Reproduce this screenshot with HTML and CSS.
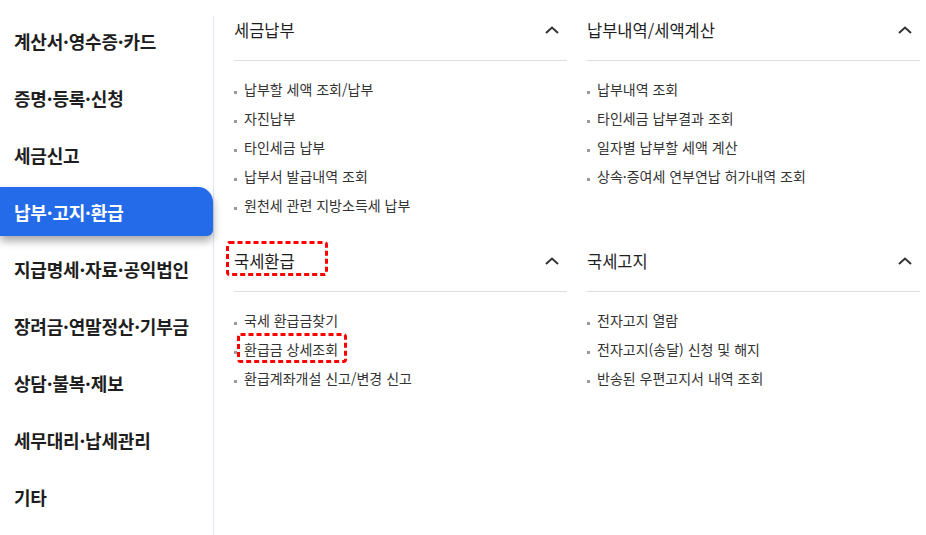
FILE: index.html
```html
<!DOCTYPE html>
<html lang="ko">
<head>
    <meta charset="utf-8">
    <title>납부·고지·환급</title>
    <link rel="stylesheet" href="styles.css">
</head>
<body>
    <div class="page">
        <ul class="side-menu">
            <li class="side-item">계산서·영수증·카드</li>
            <li class="side-item">증명·등록·신청</li>
            <li class="side-item">세금신고</li>
            <li class="side-item active">납부·고지·환급</li>
            <li class="side-item">지급명세·자료·공익법인</li>
            <li class="side-item">장려금·연말정산·기부금</li>
            <li class="side-item">상담·불복·제보</li>
            <li class="side-item">세무대리·납세관리</li>
            <li class="side-item">기타</li>
        </ul>

        <div class="content">
            <section class="group">
                <div class="group-head">
                    <span class="group-title">세금납부</span>
                    <svg class="chevron" viewBox="0 0 14 8"><path d="M1 7 L7 1.5 L13 7"/></svg>
                </div>
                <ul class="links">
                    <li>납부할 세액 조회/납부</li>
                    <li>자진납부</li>
                    <li>타인세금 납부</li>
                    <li>납부서 발급내역 조회</li>
                    <li>원천세 관련 지방소득세 납부</li>
                </ul>
            </section>

            <section class="group">
                <div class="group-head">
                    <span class="group-title">납부내역/세액계산</span>
                    <svg class="chevron" viewBox="0 0 14 8"><path d="M1 7 L7 1.5 L13 7"/></svg>
                </div>
                <ul class="links">
                    <li>납부내역 조회</li>
                    <li>타인세금 납부결과 조회</li>
                    <li>일자별 납부할 세액 계산</li>
                    <li>상속·증여세 연부연납 허가내역 조회</li>
                </ul>
            </section>

            <section class="group">
                <div class="group-head">
                    <span class="group-title marked">
                        국세환급
                        <svg class="mark mark-title"><rect/></svg>
                    </span>
                    <svg class="chevron" viewBox="0 0 14 8"><path d="M1 7 L7 1.5 L13 7"/></svg>
                </div>
                <ul class="links">
                    <li>국세 환급금찾기</li>
                    <li><span class="marked">환급금 상세조회<svg class="mark mark-link"><rect/></svg></span></li>
                    <li>환급계좌개설 신고/변경 신고</li>
                </ul>
            </section>

            <section class="group">
                <div class="group-head">
                    <span class="group-title">국세고지</span>
                    <svg class="chevron" viewBox="0 0 14 8"><path d="M1 7 L7 1.5 L13 7"/></svg>
                </div>
                <ul class="links">
                    <li>전자고지 열람</li>
                    <li>전자고지(송달) 신청 및 해지</li>
                    <li>반송된 우편고지서 내역 조회</li>
                </ul>
            </section>
        </div>
    </div>
</body>
</html>
```

FILE: styles.css
```css
body {
    margin: 0;
    background: #fff;
    color: #222;
    font-family: "Noto Sans CJK KR", "Noto Sans", sans-serif;
}
ul {
    list-style: none;
    margin: 0;
    padding: 0;
}
.page {
    display: flex;
    align-items: flex-start;
}

/* left menu */
.side-menu {
    width: 213px;
    margin-top: 16px;
    min-height: calc(100vh - 16px);
    border-right: 1px solid #e3e4f2;
    display: flex;
    flex-direction: column;
    gap: 8px;
}
.side-item {
    height: 49px;
    display: flex;
    align-items: center;
    padding-left: 14px;
    font-size: 18px;
    font-weight: bold;
    color: #1e1e1e;
    letter-spacing: -0.2px;
}
.side-item.active {
    background: #246be9;
    color: #fff;
    border-radius: 0 15px 6px 0;
    box-shadow: 0 5px 8px rgba(0, 0, 0, 0.35);
}

/* right panels */
.content {
    display: grid;
    grid-template-columns: 333px 333px;
    column-gap: 20px;
    row-gap: 11px;
    padding-left: 20px;
}
.group-head {
    height: 60px;
    display: flex;
    align-items: center;
    justify-content: space-between;
    border-bottom: 1px solid #dedede;
}
.group-title {
    font-size: 16.5px;
    color: #1e1e1e;
}
.chevron {
    width: 14px;
    height: 8px;
    margin-right: 8px;
    fill: none;
    stroke: #333;
    stroke-width: 2;
}
.links {
    padding-top: 14px;
}
.links li {
    position: relative;
    padding-left: 10px;
    font-size: 14px;
    line-height: 29px;
    color: #333;
}
.links li::before {
    content: "";
    position: absolute;
    left: 0;
    top: 16px;
    width: 3px;
    height: 3px;
    background: #9a9a9a;
}

/* red dashed annotations */
.marked {
    position: relative;
}
.mark {
    position: absolute;
    overflow: visible;
}
.mark rect {
    x: 1.5px;
    y: 1.5px;
    width: calc(100% - 3px);
    height: calc(100% - 3px);
    rx: 2px;
    fill: none;
    stroke: #f00;
    stroke-width: 3;
    stroke-dasharray: 5 3;
}
.mark-title {
    left: -8px;
    top: -8px;
    width: 102px;
    height: 35px;
}
.mark-link {
    left: -7px;
    top: -6px;
    width: 110px;
    height: 30px;
}
```
